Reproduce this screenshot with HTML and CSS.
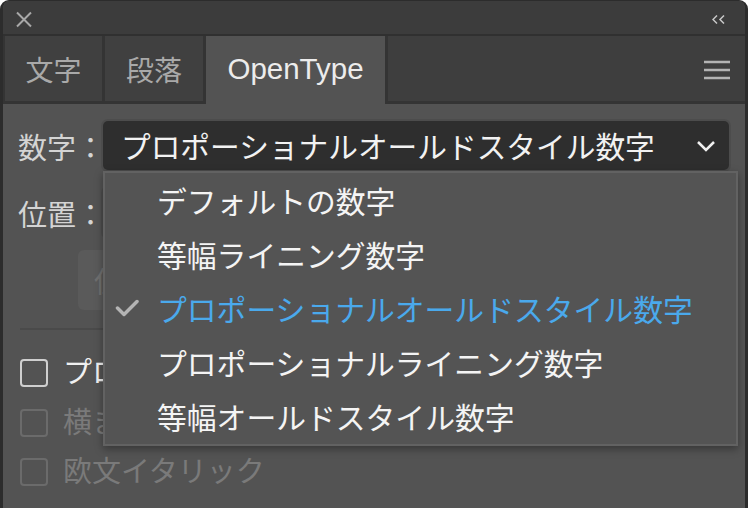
FILE: index.html
```html
<!DOCTYPE html>
<html lang="ja">
<head>
    <meta charset="UTF-8">
    <meta name="viewport" content="width=device-width, initial-scale=1.0">
    <title>OpenType</title>
    <link rel="stylesheet" href="styles.css">
</head>
<body>

<div class="panel">
    <div class="titlebar">
        <svg class="close-icon" width="18" height="17" viewBox="0 0 18 17">
            <path d="M2 1.5L16 15.5M16 1.5L2 15.5" stroke="#a8a8a8" stroke-width="2" fill="none"/>
        </svg>
        <svg class="collapse-icon" width="13" height="9" viewBox="0 0 13 9">
            <path d="M5 0.5L1 4.5L5 8.5M12 0.5L8 4.5L12 8.5" stroke="#c8c8c8" stroke-width="1.5" fill="none"/>
        </svg>
    </div>

    <div class="tabs">
        <div class="tab tab-first">文字</div>
        <div class="tab tab-second">段落</div>
        <div class="tab tab-active">OpenType</div>
        <div class="tabs-fill">
            <svg width="26" height="20" viewBox="0 0 26 20">
                <path d="M0 2h26M0 10h26M0 18h26" stroke="#b3b3b3" stroke-width="2.5"/>
            </svg>
        </div>
    </div>

    <div class="content">
        <div class="field">
            <span class="label">数字：</span>
            <div class="select">
                <span>プロポーショナルオールドスタイル数字</span>
                <svg width="20" height="12" viewBox="0 0 20 12">
                    <path d="M2 2L10 10L18 2" stroke="#f0f0f0" stroke-width="2.5" fill="none"/>
                </svg>
            </div>

            <!-- open dropdown of the 数字 select -->
            <ul class="dropdown">
                <li class="option"><span class="mark"></span>デフォルトの数字</li>
                <li class="option"><span class="mark"></span>等幅ライニング数字</li>
                <li class="option checked">
                    <span class="mark">
                        <svg width="24" height="18" viewBox="0 0 24 18">
                            <path d="M2.5 9L9 15.5L22 2.5" stroke="#b4b4b4" stroke-width="3.5" fill="none" stroke-linecap="round" stroke-linejoin="round"/>
                        </svg>
                    </span>プロポーショナルオールドスタイル数字
                </li>
                <li class="option"><span class="mark"></span>プロポーショナルライニング数字</li>
                <li class="option"><span class="mark"></span>等幅オールドスタイル数字</li>
            </ul>
        </div>

        <div class="field field-second">
            <span class="label">位置：</span>
            <div class="select"><span>標準位置</span></div>
        </div>

        <div class="glyph-row">
            <button class="glyph-btn">位置</button>
        </div>

        <div class="divider"></div>

        <div class="checks">
            <label class="check"><span class="box"></span>プロポーショナルメトリクス</label>
            <label class="check check-off"><span class="box"></span>横または縦組み用かな</label>
            <label class="check check-off"><span class="box"></span>欧文イタリック</label>
        </div>
    </div>
</div>

</body>
</html>
```

FILE: styles.css
```css
body {
    margin: 0;
    background-color: #ffffff;
    font-family: "Liberation Sans", "Noto Sans CJK JP", sans-serif;
}

.panel {
    height: 508px;
    box-sizing: border-box;
    border: 3px solid #2c2c2c;
    border-top-width: 1px;
    border-bottom: none;
    border-radius: 9px 9px 0 0;
    background-color: #535353;
    overflow: hidden;
}

.titlebar {
    height: 35px;
    box-sizing: border-box;
    padding: 4px 20px 0 12px;
    background-color: #3c3c3c;
    border-bottom: 2px solid #303030;
    display: flex;
    align-items: center;
    justify-content: space-between;
}

.tabs {
    height: 68px;
    display: flex;
    background-color: #3e3e3e;
}

.tab {
    flex: none;
    display: flex;
    align-items: center;
    justify-content: center;
    font-size: 28px;
    color: #a9a9a9;
    background-color: #404040;
    border-right: 3px solid #343434;
    border-bottom: 3px solid #343434;
}

.tab-first {
    width: 97px;
    border-left: 2px solid #343434;
}

.tab-second {
    width: 98px;
}

.tab-active {
    width: 179px;
    font-size: 29.5px;
    color: #ececec;
    background-color: #535353;
    border-bottom: none;
    padding-bottom: 3px;
}

.tabs-fill {
    flex: 1;
    display: flex;
    align-items: center;
    justify-content: flex-end;
    padding: 3px 15px 0 0;
    border-bottom: 3px solid #343434;
}

.content {
    padding: 17px 0 0 0;
}

.field {
    position: relative;
    height: 49px;
    display: flex;
    align-items: center;
    padding: 0 16px 0 15px;
}

.field-second {
    margin-top: 18px;
}

.label {
    flex: none;
    width: 85px;
    white-space: nowrap;
    font-size: 29px;
    color: #d4d4d4;
}

.select {
    flex: 1;
    height: 49px;
    box-sizing: border-box;
    display: flex;
    align-items: center;
    justify-content: space-between;
    padding: 0 13px 0 18px;
    background-color: #2e2e2e;
    border-radius: 5px;
    box-shadow: 0 0 0 2px #4c4c4c;
    font-size: 29.7px;
    white-space: nowrap;
    color: #f2f2f2;
}

.dropdown {
    position: absolute;
    left: 100px;
    top: 50px;
    z-index: 10;
    width: 635px;
    box-sizing: border-box;
    margin: 0;
    padding: 0 0 1px 0;
    list-style: none;
    background-color: #545454;
    border: 2px solid #626262;
    box-shadow: 0 3px 8px rgba(0, 0, 0, 0.35);
}

.option {
    height: 54px;
    display: flex;
    align-items: center;
    font-size: 29.8px;
    white-space: nowrap;
    color: #f4f4f4;
}

.mark {
    flex: none;
    width: 52px;
    display: flex;
    align-items: center;
    padding-left: 10px;
    box-sizing: border-box;
}

.checked {
    color: #4aa9ec;
}

.glyph-row {
    margin: 13px 0 0 75px;
}

.glyph-btn {
    width: 260px;
    height: 60px;
    border: none;
    border-radius: 6px;
    padding: 0 0 0 16px;
    text-align: left;
    background-color: #5a5a5a;
    font-family: inherit;
    font-size: 29px;
    color: #707070;
}

.divider {
    height: 2px;
    margin: 18px 16px 0 17px;
    background-color: #4a4a4a;
}

.checks {
    display: flex;
    flex-direction: column;
    gap: 21.5px;
    margin-top: 29px;
    padding-left: 17px;
}

.check {
    height: 28px;
    display: flex;
    align-items: center;
    gap: 15px;
    font-size: 29px;
    line-height: 28px;
    white-space: nowrap;
    color: #f0f0f0;
}

.box {
    flex: none;
    width: 28px;
    height: 28px;
    box-sizing: border-box;
    border: 2px solid #cfcfcf;
    border-radius: 4px;
}

.check-off {
    color: #7a7a7a;
}

.check-off .box {
    border-color: #6b6b6b;
}
```
